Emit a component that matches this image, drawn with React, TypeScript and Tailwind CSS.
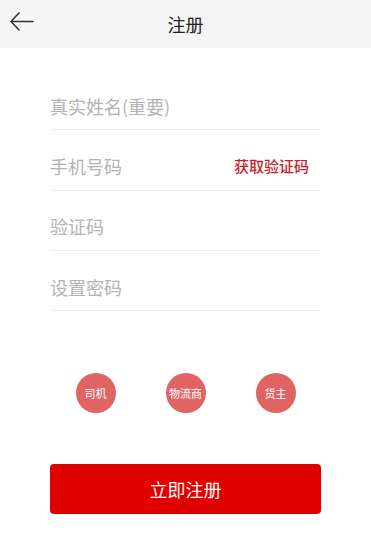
const font = { fontFamily: '"Noto Sans CJK SC", "Noto Sans", sans-serif' };

function Field({ placeholder, action }: { placeholder: string; action?: string }) {
  return (
    <div className="flex h-[60.3px] items-center justify-between border-b border-[#ececec] pt-3">
      <span className="text-[18px] leading-none text-[#b3b3b3]">{placeholder}</span>
      {action && <span className="mr-[12px] text-[15px] font-medium leading-none text-[#c62129]">{action}</span>}
    </div>
  );
}

export default function App() {
  return (
    <div className="flex h-[536px] w-[371px] flex-col bg-white" style={font}>
      {/* header */}
      <div className="relative flex h-[48px] items-center justify-center bg-[#f5f5f5]">
        <svg
          className="absolute left-[9px] top-[11px] h-[22px] w-[26px]"
          viewBox="0 0 26 22"
          fill="none"
          stroke="#333"
          strokeWidth={1.6}
          strokeLinecap="round"
          strokeLinejoin="round"
        >
          <path d="M24 10.5H2M10 2L2 10.5L10 19" />
        </svg>
        <span className="text-[18px] text-[#222]">注册</span>
      </div>

      <div className="mx-[50px] mt-[22px] flex flex-col">
        <Field placeholder="真实姓名(重要)" />
        <Field placeholder="手机号码" action="获取验证码" />
        <Field placeholder="验证码" />
        <Field placeholder="设置密码" />
      </div>

      <div className="mt-[62px] flex justify-center gap-[50px]">
        {["司机", "物流商", "货主"].map((t) => (
          <div
            key={t}
            className="flex h-[40px] w-[40px] items-center justify-center rounded-full bg-[#e06464] text-[11px] text-white"
          >
            {t}
          </div>
        ))}
      </div>

      <button className="mx-[50px] mt-[51px] flex h-[50px] items-center justify-center rounded-[4px] bg-[#e10000] text-[18px] text-white">
        立即注册
      </button>
    </div>
  );
}
